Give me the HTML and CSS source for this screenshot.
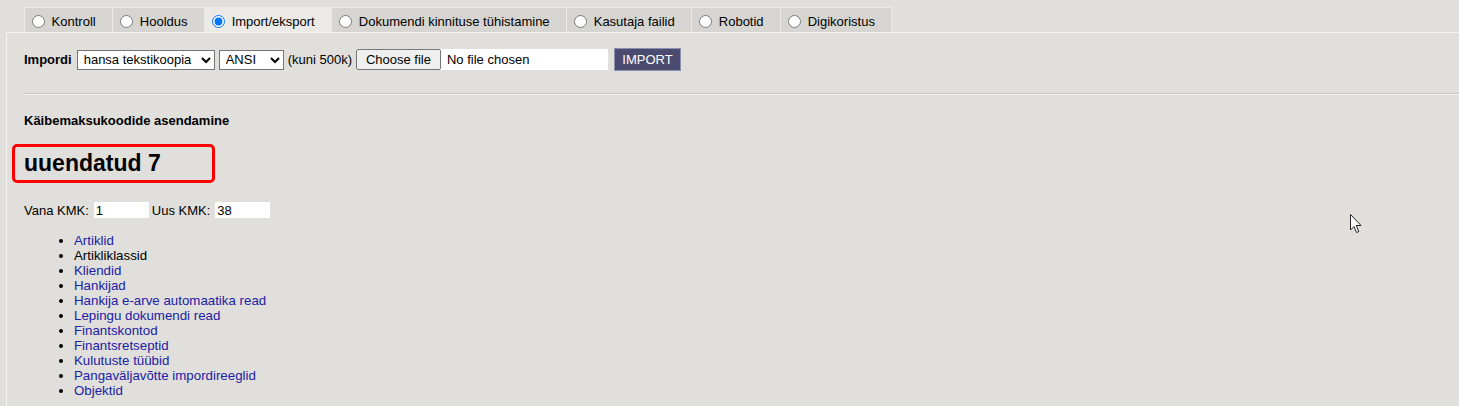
FILE: index.html
```html
<!DOCTYPE html>
<html lang="et">
<head>
  <meta charset="UTF-8">
  <title>Import/eksport</title>
  <link rel="stylesheet" href="styles.css">
</head>
<body>

  <div class="tabs">
    <label class="tab"><input type="radio" name="tab"> Kontroll</label>
    <label class="tab"><input type="radio" name="tab"> Hooldus</label>
    <label class="tab active"><input type="radio" name="tab" checked> Import/eksport</label>
    <label class="tab"><input type="radio" name="tab"> Dokumendi kinnituse tühistamine</label>
    <label class="tab"><input type="radio" name="tab"> Kasutaja failid</label>
    <label class="tab"><input type="radio" name="tab"> Robotid</label>
    <label class="tab"><input type="radio" name="tab"> Digikoristus</label>
  </div>

  <div class="panel">
    <div class="import-row">
      <b>Impordi</b>
      <select class="sel-type">
        <option>hansa tekstikoopia</option>
      </select>
      <select class="sel-enc">
        <option>ANSI</option>
      </select>
      <span>(kuni 500k)</span>
      <label class="file">
        <span class="file-btn">Choose file</span>
        <span class="file-name">No file chosen</span>
        <input type="file" hidden>
      </label>
      <button class="import-btn">IMPORT</button>
    </div>

    <div class="divider"></div>

    <div class="section-title">Käibemaksukoodide asendamine</div>

    <div class="result">uuendatud 7</div>

    <div class="kmk-row">
      <span>Vana KMK:</span>
      <input type="text" class="kmk" value="1">
      <span>Uus KMK:</span>
      <input type="text" class="kmk" value="38">
    </div>

    <ul class="regs">
      <li><a href="#">Artiklid</a></li>
      <li>Artikliklassid</li>
      <li><a href="#">Kliendid</a></li>
      <li><a href="#">Hankijad</a></li>
      <li><a href="#">Hankija e-arve automaatika read</a></li>
      <li><a href="#">Lepingu dokumendi read</a></li>
      <li><a href="#">Finantskontod</a></li>
      <li><a href="#">Finantsretseptid</a></li>
      <li><a href="#">Kulutuste tüübid</a></li>
      <li><a href="#">Pangaväljavõtte impordireeglid</a></li>
      <li><a href="#">Objektid</a></li>
    </ul>
  </div>

  <svg class="cursor" width="12" height="20" viewBox="0 0 12 20">
    <path d="M0.5 0.5 L0.5 16 L4 12.5 L6.5 18.5 L8.8 17.5 L6.3 11.5 L11 11.5 Z" fill="#fff" stroke="#222" stroke-width="1"/>
  </svg>

</body>
</html>
```

FILE: styles.css
```css
body {
  font-family: 'Liberation Sans', Arial, sans-serif;
  font-size: 13px;
  background-color: #e0dfdb;
  color: #000;
  margin: 0;
  padding: 0;
  position: relative;
}

.tabs {
  display: flex;
  padding: 7px 0 0 24px;
  height: 25px;
}

.tab {
  display: flex;
  align-items: center;
  padding: 3px 16.5px 0 2px;
  background-color: #d6d5d1;
  border-left: 1px solid #ecebe8;
  border-top: 1px solid #ecebe8;
  white-space: pre;
}

.tab:last-child {
  border-right: 1px solid #ecebe8;
}

.tab input {
  margin: 0 3px 0 5px;
}

.tab.active {
  background-color: #ebeae7;
}

.panel {
  margin-left: 6px;
  border-top: 1px solid #f4f3f1;
  border-left: 1px solid #f4f3f1;
  padding: 15px 0 10px 17px;
}

.import-row {
  display: flex;
  align-items: center;
  gap: 4px;
  height: 23px;
}

select {
  font-family: 'Liberation Sans', Arial, sans-serif;
  font-size: 13px;
  height: 20px;
  border: 1px solid #767676;
  background-color: white;
  padding: 0 0 0 2px;
}

.sel-type {
  width: 138px;
  margin-left: 1px;
}

.sel-enc {
  width: 65px;
}

.file {
  display: flex;
  align-items: center;
  width: 252px;
  height: 21px;
  background-color: white;
}

.file-btn {
  display: flex;
  align-items: center;
  justify-content: center;
  width: 85px;
  height: 21px;
  box-sizing: border-box;
  background-color: #efefef;
  border: 1px solid #767676;
  border-radius: 2px;
}

.file-name {
  padding-left: 6px;
}

.import-btn {
  font-family: 'Liberation Sans', Arial, sans-serif;
  font-size: 13px;
  height: 23px;
  width: 67px;
  margin-left: 2px;
  background-color: #4b4b6f;
  color: white;
  border: 1px solid #8e8eb0;
  padding: 0;
}

.divider {
  margin: 22px 0 0 0;
  border-top: 1px solid #c6c5c1;
  border-bottom: 1px solid #f2f2f0;
}

.section-title {
  font-weight: bold;
  margin-top: 18px;
}

.result {
  width: 188px;
  margin: 16px 0 0 -12px;
  padding: 3px 0 4px 9px;
  border: 3px solid #ff0000;
  border-radius: 5px;
  font-size: 23px;
  font-weight: bold;
  line-height: 26px;
}

.kmk-row {
  display: flex;
  align-items: center;
  margin-top: 19px;
}

.kmk-row span {
  margin-right: 5px;
}

.kmk {
  font-family: 'Liberation Sans', Arial, sans-serif;
  font-size: 13px;
  width: 55px;
  height: 16px;
  border: none;
  padding: 0 2px;
  box-sizing: border-box;
  margin-right: 3px;
}

.regs {
  margin: 15px 0 0 0;
  padding-left: 50px;
  font-size: 13.3px;
  line-height: 15px;
}

.regs a {
  color: #2020a6;
  text-decoration: none;
}

.cursor {
  position: absolute;
  left: 1350px;
  top: 214px;
}
```
